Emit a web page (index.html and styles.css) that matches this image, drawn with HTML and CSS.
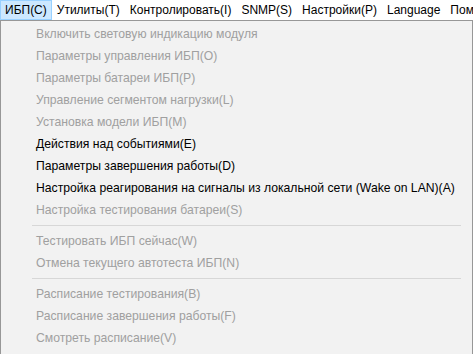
FILE: index.html
```html
<!DOCTYPE html>
<html lang="ru">

<head>
  <meta charset="UTF-8">
  <title>ИБП</title>
  <link rel="stylesheet" href="styles.css">
</head>

<body>
  <nav class="menubar">
    <span class="menu-item active">ИБП(C)</span>
    <span class="menu-item">Утилиты(T)</span>
    <span class="menu-item">Контролировать(I)</span>
    <span class="menu-item">SNMP(S)</span>
    <span class="menu-item">Настройки(P)</span>
    <span class="menu-item">Language</span>
    <span class="menu-item">Помощь(H)</span>
  </nav>

  <ul class="dropdown">
    <li class="disabled">Включить световую индикацию модуля</li>
    <li class="disabled">Параметры управления ИБП(O)</li>
    <li class="disabled">Параметры батареи ИБП(P)</li>
    <li class="disabled">Управление сегментом нагрузки(L)</li>
    <li class="disabled">Установка модели ИБП(M)</li>
    <li>Действия над событиями(E)</li>
    <li>Параметры завершения работы(D)</li>
    <li>Настройка реагирования на сигналы из локальной сети (Wake on LAN)(A)</li>
    <li class="disabled">Настройка тестирования батареи(S)</li>
    <li class="separator"></li>
    <li class="disabled">Тестировать ИБП сейчас(W)</li>
    <li class="disabled">Отмена текущего автотеста ИБП(N)</li>
    <li class="separator"></li>
    <li class="disabled">Расписание тестирования(B)</li>
    <li class="disabled">Расписание завершения работы(F)</li>
    <li class="disabled">Смотреть расписание(V)</li>
  </ul>
</body>

</html>
```

FILE: styles.css
```css
body {
  margin: 0;
  font-family: 'Liberation Sans', Arial, sans-serif;
  font-size: 12px;
  background-color: #ffffff;
  width: 473px;
  height: 354px;
  overflow: hidden;
}

.menubar {
  display: flex;
  height: 20px;
  white-space: nowrap;
  overflow: hidden;
}

.menu-item {
  padding: 0 4px;
  line-height: 18px;
  border: 1px solid transparent;
  color: #000000;
  flex-shrink: 0;
}

.menu-item.active {
  background-color: #cce8ff;
  border-color: #99d1ff;
}

.dropdown {
  list-style: none;
  margin: 0;
  padding: 2px 0;
  width: 471px;
  height: 330px;
  border: 1px solid #979797;
  background-color: #f2f2f2;
  box-sizing: content-box;
  font-size: 12.2px;
}

.dropdown li {
  height: 22px;
  line-height: 22px;
  padding-left: 35px;
  color: #000000;
  white-space: nowrap;
}

.dropdown li.disabled {
  color: #a0a0a0;
}

.dropdown li.separator {
  height: 9px;
  padding: 0;
  margin-left: 31px;
  margin-right: 11px;
  position: relative;
}

.dropdown li.separator::after {
  content: '';
  position: absolute;
  left: 0;
  right: 0;
  top: 4px;
  border-top: 1px solid #d7d7d7;
}
```
